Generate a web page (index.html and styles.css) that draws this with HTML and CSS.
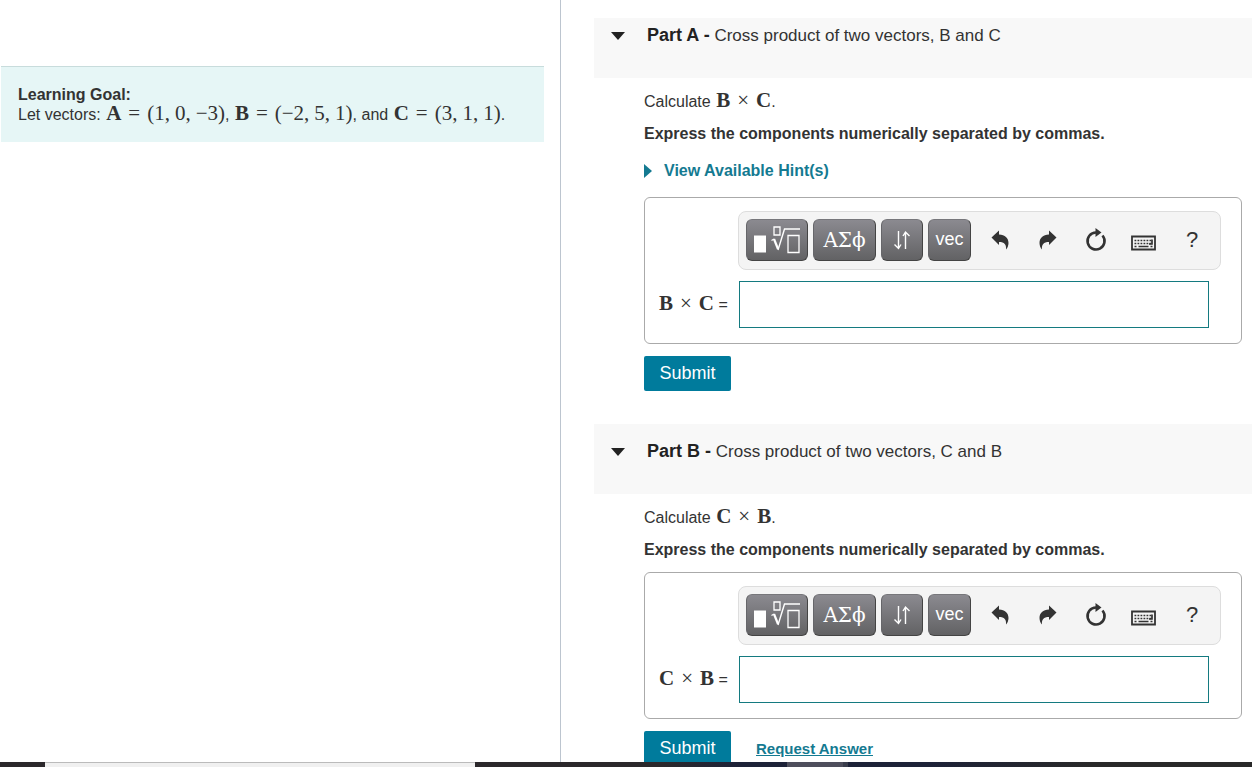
FILE: index.html
```html
<!DOCTYPE html>
<html lang="en">
<head>
<meta charset="utf-8">
<title>Cross product of two vectors</title>
<link rel="stylesheet" href="styles.css">
</head>
<body>
<svg class="sprite" aria-hidden="true">
  <symbol id="i-root" viewBox="0 0 50 30">
    <path d="M2 10.500h12v17H2z" fill="#fff"/>
    <g fill="none" stroke="#fff">
      <path d="M22 2h6v8h-6z" stroke-width="1.300"/>
      <path d="M19.500 15.500l2.500-1.500" stroke-width="1.300"/>
      <path d="M22 14l4 10" stroke-width="2.200"/>
      <path d="M26 25l6.500-21H48" stroke-width="1.400"/>
      <path d="M36 10.500h11v17H36z" stroke-width="1.300"/>
    </g>
  </symbol>
  <symbol id="i-arrows" viewBox="0 0 18 20">
    <path d="M5.500 1v17M1.500 14.500L5.500 18.500l2.500-4M12.500 19V2M10 6L12.500 2l4 4" fill="none" stroke="#fff" stroke-width="1.400"/>
  </symbol>
  <symbol id="i-undo" viewBox="0 0 18 20">
    <path d="M0.500 7.500L8 0.500v4c6 .2 9.500 3.500 9.500 8.500 0 2.500-1 5-2.500 6.500.5-5-1.500-7.500-7-7.500v3z"/>
  </symbol>
  <symbol id="i-reset" viewBox="0 0 22 24">
    <path d="M11 4.500a8.500 8.500 0 1 0 6.500 3" fill="none" stroke="currentColor" stroke-width="2.600"/>
    <path d="M10.500 0l6 4.500-6 4.500z"/>
  </symbol>
  <symbol id="i-keys" viewBox="0 0 26 16">
    <path d="M1 1.500h23v13H1z" fill="none" stroke="currentColor" stroke-width="1.800"/>
    <path d="M3.500 5.500h18M3.500 8.500h18" fill="none" stroke="currentColor" stroke-width="1.700" stroke-dasharray="1.800 1.200"/>
    <path d="M3.500 11.500h2M7.500 11.500h10M19.500 11.500h2M21 4.500v4.500h-3" fill="none" stroke="currentColor" stroke-width="1.700"/>
  </symbol>
</svg>
<div class="page">
  <aside class="side">
    <section class="goal">
      <h2 class="goal-title">Learning Goal:</h2>
      <p class="goal-text">Let vectors: <span class="math"><b>A</b><i>=</i>(1,<s></s>0,<s></s>−3)</span>, <span class="math"><b>B</b><i>=</i>(−2,<s></s>5,<s></s>1)</span>, and <span class="math"><b>C</b><i>=</i>(3,<s></s>1,<s></s>1)</span>.</p>
    </section>
  </aside>
  <main class="content">
    <section class="part">
      <header class="part-head part-head-first">
        <button class="toggle" type="button" aria-label="Collapse Part A"><svg width="14" height="8" viewBox="0 0 14 8"><path d="M0 0h14L7 8z"/></svg></button>
        <h2 class="part-title"><b>Part A -</b> Cross product of two vectors, B and C</h2>
      </header>
      <div class="part-body">
        <p class="task">Calculate <span class="math"><b>B</b><i>×</i><b>C</b></span>.</p>
        <p class="express">Express the components numerically separated by commas.</p>
        <a class="hints" href="#hints"><svg width="8" height="14" viewBox="0 0 8 14"><path d="M0 0l8 7-8 7z"/></svg>View Available Hint(s)</a>
        <div class="answer">
          <div class="toolbar">
            <button class="key key-root" type="button" aria-label="Templates"><svg width="50" height="30"><use href="#i-root"/></svg></button>
            <button class="key key-greek" type="button">ΑΣϕ</button>
            <button class="key" type="button" aria-label="Arrows"><svg width="18" height="20"><use href="#i-arrows"/></svg></button>
            <button class="key key-vec" type="button">vec</button>
            <div class="tools">
              <button class="tool" type="button" aria-label="Undo"><svg width="18" height="20"><use href="#i-undo"/></svg></button>
              <button class="tool" type="button" aria-label="Redo"><svg class="flip" width="18" height="20"><use href="#i-undo"/></svg></button>
              <button class="tool" type="button" aria-label="Reset"><svg width="22" height="24"><use href="#i-reset"/></svg></button>
              <button class="tool tool-keys" type="button" aria-label="Keyboard"><svg width="26" height="16"><use href="#i-keys"/></svg></button>
              <button class="tool" type="button">?</button>
            </div>
          </div>
          <label class="answer-label" for="answer-a"><span class="math"><b>B</b><i>×</i><b>C</b></span> =</label>
          <input class="answer-input" id="answer-a" type="text">
        </div>
        <div class="actions"><button class="submit" type="button">Submit</button></div>
      </div>
    </section>
    <section class="part">
      <header class="part-head">
        <button class="toggle" type="button" aria-label="Collapse Part B"><svg width="14" height="8" viewBox="0 0 14 8"><path d="M0 0h14L7 8z"/></svg></button>
        <h2 class="part-title"><b>Part B -</b> Cross product of two vectors, C and B</h2>
      </header>
      <div class="part-body">
        <p class="task">Calculate <span class="math"><b>C</b><i>×</i><b>B</b></span>.</p>
        <p class="express">Express the components numerically separated by commas.</p>
        <div class="answer">
          <div class="toolbar">
            <button class="key key-root" type="button" aria-label="Templates"><svg width="50" height="30"><use href="#i-root"/></svg></button>
            <button class="key key-greek" type="button">ΑΣϕ</button>
            <button class="key" type="button" aria-label="Arrows"><svg width="18" height="20"><use href="#i-arrows"/></svg></button>
            <button class="key key-vec" type="button">vec</button>
            <div class="tools">
              <button class="tool" type="button" aria-label="Undo"><svg width="18" height="20"><use href="#i-undo"/></svg></button>
              <button class="tool" type="button" aria-label="Redo"><svg class="flip" width="18" height="20"><use href="#i-undo"/></svg></button>
              <button class="tool" type="button" aria-label="Reset"><svg width="22" height="24"><use href="#i-reset"/></svg></button>
              <button class="tool tool-keys" type="button" aria-label="Keyboard"><svg width="26" height="16"><use href="#i-keys"/></svg></button>
              <button class="tool" type="button">?</button>
            </div>
          </div>
          <label class="answer-label" for="answer-b"><span class="math"><b>C</b><i>×</i><b>B</b></span> =</label>
          <input class="answer-input" id="answer-b" type="text">
        </div>
        <div class="actions"><button class="submit" type="button">Submit</button><a class="request" href="#request">Request Answer</a></div>
      </div>
    </section>
  </main>
</div>
<div class="taskbar"><span class="task-start"></span><span class="task-search"></span><span class="task-gap"></span><span class="task-app"></span><span class="task-edge"></span><span class="task-rest"></span></div>
</body>
</html>
```
FILE: styles.css
```css
* { box-sizing: border-box; }
body {
  margin: 0;
  height: 100vh;
  display: flex;
  flex-direction: column;
  overflow: hidden;
  background: #fff;
  color: #333;
  font: 16px/20px "Liberation Sans", Arial, sans-serif;
}
h2, p { margin: 0; }
button, input { font: inherit; color: inherit; }
button { border: 0; padding: 0; background: none; cursor: pointer; }
svg { display: block; fill: currentColor; }
.sprite { position: absolute; width: 0; height: 0; }

.page {
  flex: 1;
  min-height: 0;
  display: grid;
  grid-template-columns: 561fr 691fr;
  overflow: hidden;
}
.side { border-right: 1px solid #bcc5cf; padding: 66px 16px 0 1px; }
.goal {
  background: #e6f6f6;
  border-top: 1px solid #c8dcdc;
  padding: 18px 17px 17px;
}
.goal-title { font-size: 16px; line-height: 20px; }
.goal-text { white-space: nowrap; }

.math {
  margin-left: 1px;
  font: 21px/0 "Liberation Serif", "Times New Roman", serif;
  white-space: nowrap;
}
.math i { font-style: normal; margin: 0 7px; }
.math s { margin-right: 5px; }

.content { padding: 18px 0 0 33px; min-width: 0; }
.part-head {
  display: flex;
  align-items: center;
  gap: 22px;
  padding: 18px 17px 32px;
  background: #f8f8f8;
}
.part-head-first { padding-top: 8px; }
.toggle { color: #222; }
.part-title { font-size: 17px; line-height: 20px; font-weight: 400; }
.part-title b { font-size: 18px; line-height: 0; color: #222; }
.part-body { padding: 11px 10px 33px 50px; }
.task { line-height: 26px; }
.express { margin-top: 7px; line-height: 24px; font-weight: 700; }
.hints {
  display: flex;
  align-items: center;
  gap: 12px;
  margin: 13px 0 14px;
  line-height: 24px;
  font-weight: 700;
  color: #147a91;
  text-decoration: none;
}

.answer {
  display: grid;
  grid-template-columns: 93px 1fr;
  row-gap: 11px;
  margin-top: 10px;
  padding: 13px 20px 15px 0;
  border: 1px solid #aaa;
  border-radius: 6px;
}
.toolbar {
  grid-column: 2;
  display: flex;
  gap: 5px;
  padding: 7px 4px 8px 7px;
  background: #f4f4f4;
  border: 1px solid #ddd;
  border-radius: 8px;
}
.key {
  flex: none;
  display: flex;
  align-items: center;
  justify-content: center;
  width: 42px;
  height: 42px;
  color: #fff;
  background: linear-gradient(#8b8a90, #626264);
  border: 1px solid #444;
  border-top-color: #77777b;
  border-left-color: #66666a;
  border-radius: 6px;
}
.key-root { width: 62px; }
.key-greek { width: 63px; font: 20px/20px "DejaVu Serif", serif; }
.key-vec { width: 43px; font-size: 18px; padding-bottom: 3px; }
.tools { display: flex; align-items: center; }
.tool {
  display: flex;
  align-items: center;
  justify-content: center;
  width: 48px;
  height: 42px;
  color: #333;
  font-size: 22px;
}
.tool-keys { padding-top: 5px; }
.flip { transform: scaleX(-1); }
.answer-label { padding-left: 13px; align-self: center; white-space: nowrap; }
.answer-input {
  height: 47px;
  min-width: 0;
  margin: 0 12px 0 1px;
  padding: 0 10px;
  border: 1px solid #147a80;
  background: #fff;
}
.actions { display: flex; align-items: center; gap: 25px; margin-top: 12px; }
.submit {
  width: 87px;
  height: 35px;
  padding-bottom: 2px;
  font-size: 18px;
  color: #fff;
  background: #007b9c;
  border-radius: 2px;
}
.request { font-size: 15px; font-weight: 700; color: #147a91; }

.taskbar { display: flex; height: 5px; flex: none; background: #2b282b; }
.task-start { width: 45px; }
.task-search { width: 430px; background: #f0f0f0; border-top: 1px solid #bbb; }
.task-gap { width: 312px; background: linear-gradient(90deg, #2b282b 60%, #1d2238 85%); }
.task-app { width: 56px; background: #4e4e5c; }
.task-edge { width: 5px; background: #3a3d4c; }
.task-rest { flex: 1; background: linear-gradient(90deg, #1d2238 20%, #292929 60%); }
```
